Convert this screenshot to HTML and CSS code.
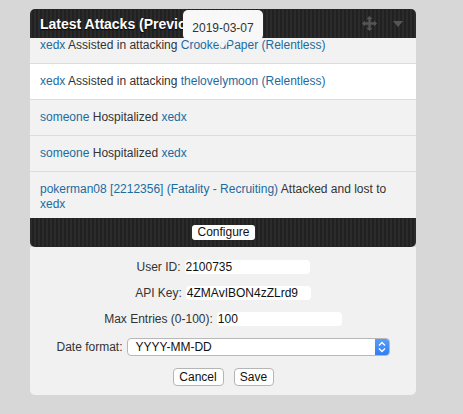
FILE: index.html
```html
<!DOCTYPE html>
<html>
<head>
<meta charset="utf-8">
<link rel="stylesheet" href="styles.css">
</head>
<body>
<div class="panel">
  <div class="header">
    <span class="title">Latest Attacks (Previous)</span>
    <span class="icons">
      <svg class="move" width="15" height="15" viewBox="0 0 15 15"><path d="M7.5 0 L10.5 3 H8.7 V6.3 H12 V4.5 L15 7.5 L12 10.5 V8.7 H8.7 V12 H10.5 L7.5 15 L4.5 12 H6.3 V8.7 H3 V10.5 L0 7.5 L3 4.5 V6.3 H6.3 V3 H4.5 Z" fill="#555"/></svg>
      <svg class="caret" width="10" height="6" viewBox="0 0 10 6"><path d="M0 0 H10 L5 6 Z" fill="#555"/></svg>
    </span>
  </div>
  <div class="tooltip">2019-03-07</div>
  <div class="list">
    <div class="row"><a>xedx</a> Assisted in attacking <a>CrookedPaper (Relentless)</a></div>
    <div class="row white"><a>xedx</a> Assisted in attacking <a>thelovelymoon (Relentless)</a></div>
    <div class="row"><a>someone</a> Hospitalized <a>xedx</a></div>
    <div class="row"><a>someone</a> Hospitalized <a>xedx</a></div>
    <div class="row"><a>pokerman08 [2212356] (Fatality - Recruiting)</a> Attacked and lost to <a>xedx</a></div>
  </div>
  <div class="footer"><button class="cfg">Configure</button></div>
  <div class="config">
    <div class="field"><span>User ID:</span><input class="txt" value="2100735"></div>
    <div class="field"><span>API Key:</span><input class="txt" value="4ZMAvIBON4zZLrd9"></div>
    <div class="field"><span>Max Entries (0-100):</span><input class="txt" value="100"></div>
    <div class="field sel-field"><span>Date format:</span>
      <div class="select">
        <span class="sel-text">YYYY-MM-DD</span>
        <span class="stepper"><svg width="8" height="12" viewBox="0 0 8 12"><path d="M1 4.5 L4 1.5 L7 4.5 M1 7.5 L4 10.5 L7 7.5" fill="none" stroke="#fff" stroke-width="1.4"/></svg></span>
      </div>
    </div>
    <div class="buttons"><button class="btn cancel">Cancel</button><button class="btn save">Save</button></div>
  </div>
</div>
<script src="script.js"></script>
</body>
</html>
```
FILE: styles.css
```css
html, body {
  margin: 0;
  padding: 0;
}
body {
  background: #d7d7d7;
  font-family: "Liberation Sans", Arial, sans-serif;
  font-size: 12px;
  color: #333;
  width: 463px;
  height: 414px;
  overflow: hidden;
}
.panel {
  position: relative;
  width: 386px;
  margin: 9px 0 0 30px;
}
.header {
  height: 29px;
  border-radius: 5px 5px 0 0;
  background: repeating-linear-gradient(90deg, #2b2b2b 0 2px, #212121 2px 4px);
  display: flex;
  align-items: center;
  padding: 0 10px;
  overflow: hidden;
}
.title {
  flex: 1;
  color: #fff;
  font-weight: bold;
  font-size: 14px;
  white-space: nowrap;
  text-shadow: 0 1px 1px #000;
}
.icons {
  display: flex;
  align-items: center;
  gap: 16px;
  margin-right: 3px;
}
.tooltip {
  position: absolute;
  left: 153px;
  top: 1px;
  width: 80px;
  height: 30px;
  box-sizing: border-box;
  background: #f8f8f8;
  border-radius: 5px;
  font-size: 12px;
  color: #333;
  display: flex;
  align-items: center;
  justify-content: center;
  padding-top: 5px;
  z-index: 2;
}
.tooltip::after {
  content: "";
  position: absolute;
  left: 32px;
  top: 30px;
  border-left: 7px solid transparent;
  border-right: 7px solid transparent;
  border-top: 9px solid rgba(248,248,248,0.9);
}
.list {
  height: 180px;
  overflow: hidden;
  background: #f2f2f2;
}
.row {
  padding: 10px 10px;
  line-height: 15px;
  border-bottom: 1px solid #dcdcdc;
  background: #f2f2f2;
}
.row.white {
  background: #fff;
}
.row a {
  color: #1c6b9f;
  text-decoration: none;
}
.footer {
  height: 29px;
  border-radius: 0 0 5px 5px;
  background: repeating-linear-gradient(90deg, #2b2b2b 0 2px, #212121 2px 4px);
  display: flex;
  align-items: center;
  justify-content: center;
}
.cfg {
  font-family: "Liberation Sans", Arial, sans-serif;
  font-size: 12px;
  color: #111;
  background: #fff;
  border: none;
  border-radius: 3px;
  width: 63px;
  height: 15px;
  padding: 0;
  line-height: 15px;
  margin-left: 1px;
}
.config {
  background: #f1f1f1;
  border-radius: 0 0 5px 5px;
  padding: 13px 0 9px;
  display: flex;
  flex-direction: column;
  align-items: center;
  gap: 12px;
}
.field {
  display: flex;
  align-items: center;
  gap: 4px;
  height: 14px;
}
.sel-field {
  height: 18px;
}
.txt {
  width: 125px;
  height: 14px;
  box-sizing: border-box;
  border: none;
  border-radius: 4px;
  background: #fff;
  font-family: "Liberation Sans", Arial, sans-serif;
  font-size: 12px;
  color: #111;
  padding: 0 1px;
  outline: none;
}
.select {
  position: relative;
  width: 263px;
  height: 18px;
  box-sizing: border-box;
  border: 1px solid #b8b8b8;
  border-radius: 4px;
  background: #fff;
  display: flex;
  align-items: center;
  overflow: hidden;
}
.sel-text {
  flex: 1;
  padding-left: 8px;
  color: #111;
}
.stepper {
  width: 15px;
  height: 18px;
  margin-right: -1px;
  background: linear-gradient(#5aa0f8, #2f7cf3);
  display: flex;
  align-items: center;
  justify-content: center;
}
.buttons {
  display: flex;
  gap: 10px;
  height: 18px;
}
.btn {
  font-family: "Liberation Sans", Arial, sans-serif;
  font-size: 12px;
  color: #111;
  background: #fff;
  border: 1px solid #b5b5b5;
  border-radius: 4px;
  height: 18px;
  padding: 0;
}
.cancel {
  width: 51px;
}
.save {
  width: 40px;
}
```
FILE: script.js
```js
document.querySelector('.list').scrollTop = 10;
```
